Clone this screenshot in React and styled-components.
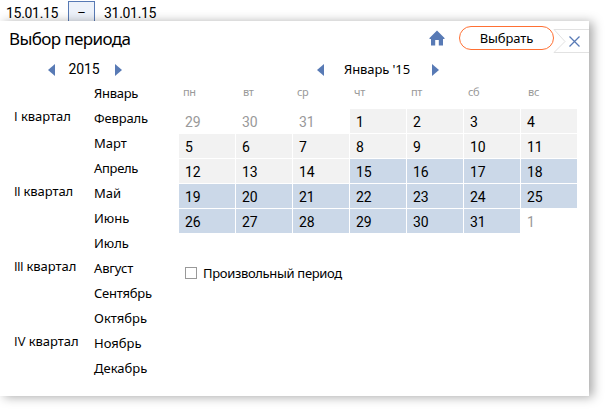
import React from "react";
import styled, { createGlobalStyle } from "styled-components";

const GlobalStyle = createGlobalStyle`
  * { box-sizing: border-box; }
  html, body, #root { height: 100%; }
  body { margin: 0; overflow: hidden; background: #fff; }
`;

const ui = `"Noto Sans", "Open Sans", sans-serif`;
const digits = `Roboto, "Noto Sans", sans-serif`;

const Page = styled.div`
  height: 410px;
  overflow: hidden;
  color: #000;
  font: 13px/25px ${ui};
  white-space: nowrap;
`;

const RangeBar = styled.div`
  display: flex;
  height: 21px;
  padding: 1px 0 0 6px;
  font: 14px/25px ${digits};
  letter-spacing: -0.3px;
`;

const RangeDate = styled.span`
  width: ${(p) => p.$width}px;
`;

const RangeToggle = styled.button`
  width: 27px;
  height: 24px;
  margin-right: 9px;
  padding: 0;
  border: 1px solid #587ab5;
  background: #edf2fa;
  color: #000;
  font: 13px/22px ${digits};
`;

const Panel = styled.section`
  position: relative;
  width: 589px;
  height: 375px;
  background: #fff;
  box-shadow: 4px 1px 10px rgba(0, 0, 0, 0.34);
`;

const Header = styled.header`
  display: flex;
  height: 36px;
  padding-left: 9px;
`;

const Title = styled.h1`
  width: 420px;
  margin: 0;
  font: 400 17px/36px ${ui};
  letter-spacing: -0.6px;
`;

const HomeIcon = styled.svg`
  width: 16px;
  height: 16px;
  margin: 9px 14px 0 0;
  fill: #587ab5;
`;

const SelectButton = styled.button`
  width: 95px;
  height: 24px;
  margin-top: 5px;
  padding: 0;
  border: 1px solid #ff7033;
  border-radius: 12px;
  background: #fff;
  color: #000;
  font: 13px/22px ${ui};
  letter-spacing: -0.1px;
`;

const CloseTab = styled.svg`
  width: 36px;
  height: 26px;
  margin: 7px 0 0 -1px;
  fill: none;
`;

const Columns = styled.div`
  display: flex;
`;

const YearSide = styled.div`
  width: 179px;
`;

const Pager = styled.div`
  display: flex;
  align-items: center;
  height: 24px;
  padding-left: ${(p) => p.$indent}px;
  font-family: ${(p) => (p.$numeric ? digits : ui)};
  font-size: ${(p) => (p.$numeric ? 14 : 13)}px;
`;

const PagerLabel = styled.span`
  width: ${(p) => p.$width}px;
  padding-right: 2px;
  text-align: center;
  letter-spacing: -0.1px;
`;

const Arrow = styled.svg`
  width: 7px;
  height: 12px;
  margin-top: 2px;
  fill: #587ab5;
  transform: ${(p) => (p.$next ? "scaleX(-1)" : "none")};
`;

const Periods = styled.div`
  display: flex;
`;

const Quarters = styled.div`
  display: flex;
  flex-direction: column;
  width: 94px;
  padding: 23px 0 0 14px;
`;

const Quarter = styled.span`
  height: 75px;
  letter-spacing: -0.05px;
`;

const Numeral = styled.span`
  font-family: "Open Sans", sans-serif;
  letter-spacing: ${(p) => p.$track}px;
`;

const Months = styled.div`
  display: flex;
  flex-direction: column;
`;

const Month = styled.span`
  height: 25px;
  letter-spacing: ${(p) => p.$track}px;
`;

const CalendarSide = styled.div`
  width: 410px;
`;

const Grid = styled.div`
  display: grid;
  grid-template-columns: repeat(7, 56px);
  gap: 1px;
`;

const Weekdays = styled(Grid)`
  height: 28px;
  color: #999;
  font-size: 11px;
  line-height: 22px;
`;

const Weekday = styled.span`
  padding-left: ${(p) => p.$indent}px;
  letter-spacing: -0.3px;
`;

const fills = { out: "#fff", day: "#f2f2f2", picked: "#cbd8e8" };

const Day = styled.span`
  height: 24px;
  padding-left: 6px;
  background: ${(p) => fills[p.$kind]};
  color: ${(p) => (p.$kind === "out" ? "#999" : "#000")};
  font: 14px/27px ${digits};
  letter-spacing: -0.2px;
`;

const CustomPeriod = styled.label`
  display: flex;
  align-items: center;
  height: 26px;
  margin: 27px 0 0 6px;
  gap: 6px;
  letter-spacing: -0.33px;
`;

const Checkbox = styled.input`
  appearance: none;
  width: 12px;
  height: 12px;
  margin: 0;
  border: 1px solid #999;
  background: #fff;
`;

const months = [
  ["Январь", -0.3], ["Февраль", -0.15], ["Март", 0], ["Апрель", -0.3],
  ["Май", 0], ["Июнь", 0], ["Июль", 0], ["Август", -0.15],
  ["Сентябрь", -0.25], ["Октябрь", 0], ["Ноябрь", 0], ["Декабрь", 0],
];
const quarters = [["I", 0], ["II", -0.6], ["III", -0.6], ["IV", 0]];
const weekdays = [["пн", 4], ["вт", 7], ["ср", 4], ["чт", 4], ["пт", 4], ["сб", 4], ["вс", 7]];

const days = Array.from({ length: 35 }, (_, i) => {
  if (i < 3) return { n: 29 + i, kind: "out" };
  if (i === 34) return { n: 1, kind: "out" };
  return { n: i - 2, kind: i - 2 < 15 ? "day" : "picked" };
});

function PageArrow({ next }) {
  return (
    <Arrow $next={next} viewBox="0 0 7 12">
      <path d="M7 0v12L0 6z" />
    </Arrow>
  );
}

export default function App() {
  return (
    <Page>
      <GlobalStyle />
      <RangeBar>
        <RangeDate $width={62}>15.01.15</RangeDate>
        <RangeToggle>–</RangeToggle>
        <RangeDate $width={60}>31.01.15</RangeDate>
      </RangeBar>
      <Panel>
        <Header>
          <Title>Выбор периода</Title>
          <HomeIcon viewBox="0 0 16 16">
            <path d="M8 0.5 15.5 8v1H14v6.5H9.8V10H6.2v5.5H2V9H0.5V8z" />
          </HomeIcon>
          <SelectButton>Выбрать</SelectButton>
          <CloseTab viewBox="0 0 36 26">
            <path d="M36 1.5H1l11 12L1 24.5h35" stroke="#e2e2e2" />
            <path d="m16.5 8.5 10 10m0-10-10 10" stroke="#587ab5" strokeWidth="1.3" />
          </CloseTab>
        </Header>
        <Columns>
          <YearSide>
            <Pager $indent={48} $numeric>
              <PageArrow />
              <PagerLabel $width={60}>2015</PagerLabel>
              <PageArrow next />
            </Pager>
            <Periods>
              <Quarters>
                {quarters.map(([name, track]) => (
                  <Quarter key={name}>
                    <Numeral $track={track}>{name}</Numeral> квартал
                  </Quarter>
                ))}
              </Quarters>
              <Months>
                {months.map(([name, track]) => (
                  <Month key={name} $track={track}>{name}</Month>
                ))}
              </Months>
            </Periods>
          </YearSide>
          <CalendarSide>
            <Pager $indent={138}>
              <PageArrow />
              <PagerLabel $width={108}>Январь '15</PagerLabel>
              <PageArrow next />
            </Pager>
            <Weekdays>
              {weekdays.map(([name, indent]) => (
                <Weekday key={name} $indent={indent}>{name}</Weekday>
              ))}
            </Weekdays>
            <Grid>
              {days.map(({ n, kind }, i) => (
                <Day key={i} $kind={kind}>{n}</Day>
              ))}
            </Grid>
            <CustomPeriod>
              <Checkbox type="checkbox" />
              Произвольный период
            </CustomPeriod>
          </CalendarSide>
        </Columns>
      </Panel>
    </Page>
  );
}
